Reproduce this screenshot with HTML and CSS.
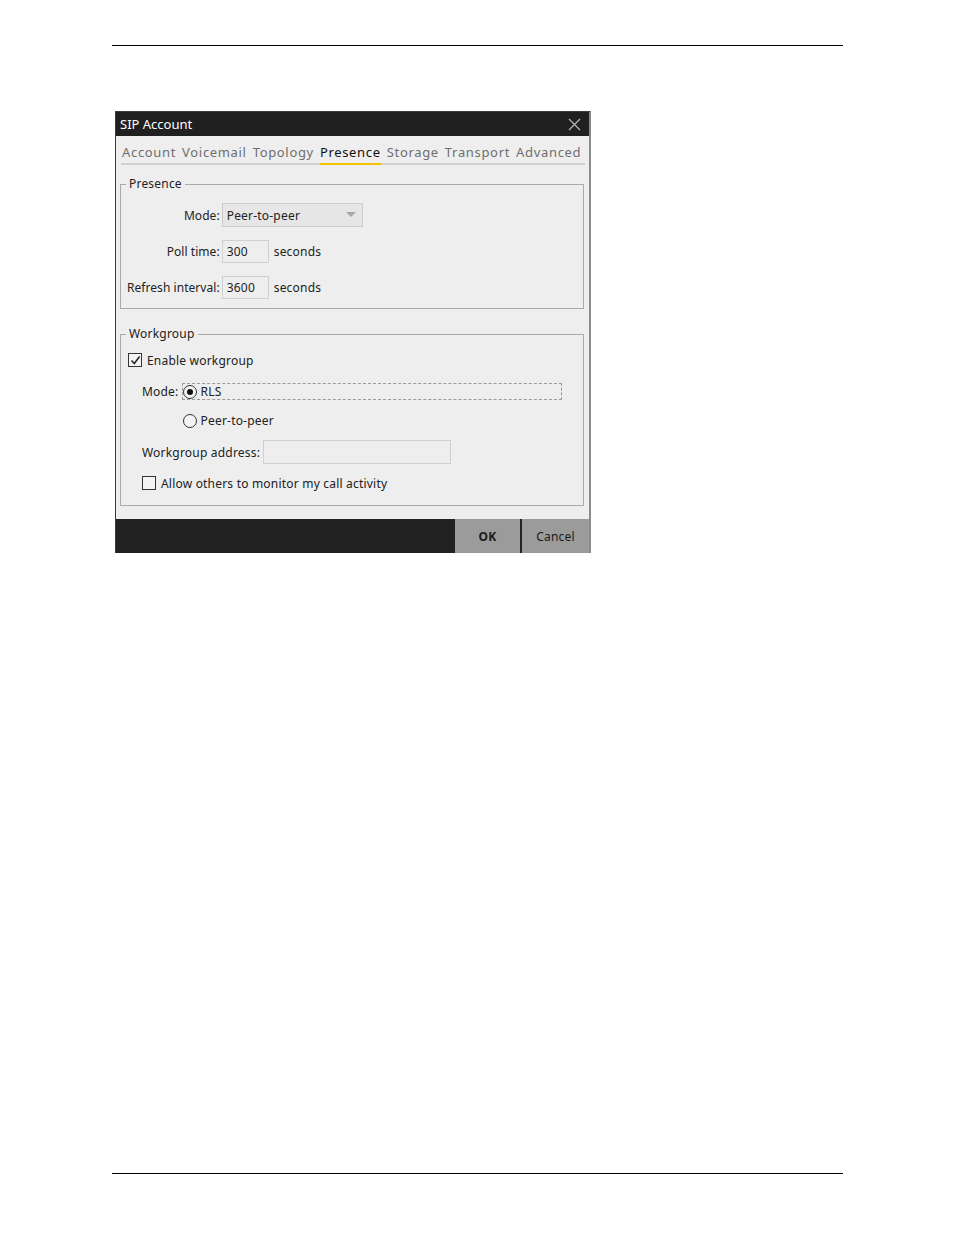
FILE: index.html
```html
<!DOCTYPE html>
<html>
<head>
<meta charset="utf-8">
<link rel="stylesheet" href="styles.css">
</head>
<body>
<div class="page">
  <div class="rule rule-top"></div>
  <div class="dialog">
    <div class="titlebar">
      <span class="title">SIP Account</span>
      <svg class="close" width="13" height="13" viewBox="0 0 13 13"><path d="M1 1 L12 12 M12 1 L1 12" stroke="#b0b0b0" stroke-width="1.4" fill="none"/></svg>
    </div>
    <div class="tabs">
      <span class="tab">Account</span>
      <span class="tab">Voicemail</span>
      <span class="tab">Topology</span>
      <span class="tab active">Presence</span>
      <span class="tab">Storage</span>
      <span class="tab">Transport</span>
      <span class="tab">Advanced</span>
    </div>
    <div class="content">
      <fieldset class="group presence">
        <legend>Presence</legend>
        <div class="form-grid">
          <span class="label">Mode:</span>
          <div class="field">
            <div class="select">
              <span>Peer-to-peer</span>
              <svg width="10" height="6" viewBox="0 0 10 6"><path d="M0 0 H10 L5 5 Z" fill="#a8a8a8"/></svg>
            </div>
          </div>
          <span class="label">Poll time:</span>
          <div class="field">
            <div class="input short">300</div>
            <span class="unit">seconds</span>
          </div>
          <span class="label">Refresh interval:</span>
          <div class="field">
            <div class="input short">3600</div>
            <span class="unit">seconds</span>
          </div>
        </div>
      </fieldset>
      <fieldset class="group workgroup">
        <legend>Workgroup</legend>
        <div class="check-row">
          <span class="checkbox checked"><svg width="11" height="11" viewBox="0 0 11 11"><path d="M1.5 5.5 L4.3 8.5 L9.6 1.5" stroke="#222" stroke-width="1.5" fill="none"/></svg></span>
          <span>Enable workgroup</span>
        </div>
        <div class="indent">
          <div class="mode-grid">
            <span class="label-left">Mode:</span>
            <div class="radio-row focused">
              <span class="radio on"><span class="dot"></span></span>
              <span>RLS</span>
            </div>
            <span></span>
            <div class="radio-row">
              <span class="radio"></span>
              <span>Peer-to-peer</span>
            </div>
          </div>
          <div class="addr-row">
            <span>Workgroup address:</span>
            <div class="input wide"></div>
          </div>
          <div class="check-row allow">
            <span class="checkbox"></span>
            <span>Allow others to monitor my call activity</span>
          </div>
        </div>
      </fieldset>
    </div>
    <div class="footer">
      <button class="btn ok">OK</button>
      <button class="btn cancel">Cancel</button>
    </div>
  </div>
  <div class="rule rule-bottom"></div>
</div>
</body>
</html>
```
FILE: styles.css
```css
* { box-sizing: border-box; }
html, body { margin: 0; padding: 0; background: #ffffff; }
body { font-family: "Noto Sans", "Open Sans", sans-serif; font-size: 12px; color: #222; letter-spacing: 0.2px; }

.page { width: 954px; height: 1235px; padding-left: 112px; padding-top: 45px; }
.rule { width: 731px; height: 1px; background: #000; }
.rule-bottom { margin-top: 620px; }

.dialog {
  margin-top: 65px;
  margin-left: 3px;
  width: 476px;
  height: 442px;
  background: #eeeeee;
  border: 1px solid #3a3a3a;
  border-right: 2px solid #8a8a8a;
  border-bottom: 0;
  display: flex;
  flex-direction: column;
}

.titlebar {
  height: 24px;
  background: #202020;
  color: #ffffff;
  display: flex;
  align-items: center;
  justify-content: space-between;
  padding: 0 8px 0 4px;
  font-size: 13px;
  letter-spacing: 0;
}
.close { display: block; }

.tabs {
  margin: 5px 4px 0 5px;
  height: 24px;
  border-bottom: 2px solid #cfcfcf;
  display: flex;
  gap: 6px;
  padding-left: 1px;
  font-size: 13px;
  letter-spacing: 0.67px;
}
.tab {
  color: #6e6e6e;
  line-height: 20px;
  padding-top: 1px;
  margin-bottom: -2px;
  border-bottom: 2px solid transparent;
}
.tab.active { color: #111; border-bottom-color: #f2c200; }

.content { flex: 1; padding: 11px 5px 0 4px; display: flex; flex-direction: column; gap: 17px; }

.group {
  margin: 0;
  border: 1px solid #a9a9a9;
  padding: 0 0 0 1px;
  min-width: 0;
}
.group legend {
  margin-left: 4px;
  padding: 0 3px;
  line-height: 16px;
  color: #222;
}

.form-grid {
  padding: 11px 0 9px 5px;
  display: grid;
  grid-template-columns: max-content max-content;
  column-gap: 2px;
  row-gap: 13px;
  align-items: center;
}
.label { text-align: right; letter-spacing: 0.05px; }
.field { display: flex; align-items: center; gap: 5px; }
.select {
  width: 141px;
  height: 24px;
  border: 1px solid #cdcdcd;
  background: #e6e6e6;
  display: flex;
  align-items: center;
  justify-content: space-between;
  padding: 0 6px 0 4px;
}
.input {
  height: 23px;
  border: 1px solid #d0d0d0;
  background: #eeeeee;
  padding: 0 4px;
  display: flex;
  align-items: center;
}
.input.short { width: 47px; }
.input.wide { width: 188px; height: 24px; }

.workgroup .check-row:first-of-type { margin-top: 10px; }
.workgroup > .check-row, .workgroup > .indent { margin-left: 6px; margin-right: 22px; }
.workgroup > .indent { margin-bottom: 14px; }
.check-row { display: flex; align-items: center; gap: 5px; height: 16px; }
.checkbox {
  width: 14px; height: 14px;
  border: 1px solid #333;
  background: #f4f4f4;
  display: flex; align-items: center; justify-content: center;
}
.indent { padding-left: 14px; display: flex; flex-direction: column; }
.mode-grid {
  margin-top: 15px;
  display: grid;
  grid-template-columns: max-content 1fr;
  column-gap: 4px;
  row-gap: 13px;
  align-items: center;
}
.radio-row { display: flex; align-items: center; gap: 4px; height: 15px; }
.radio-row.focused { outline: 1px dashed #9a9a9a; outline-offset: 0; }
.radio {
  width: 14px; height: 14px;
  border: 1px solid #333;
  border-radius: 50%;
  background: #f4f4f4;
  display: flex; align-items: center; justify-content: center;
}
.dot { width: 6px; height: 6px; border-radius: 50%; background: #111; }
.addr-row { margin-top: 12px; display: flex; align-items: center; gap: 3px; }
.check-row.allow { margin-top: 11px; }

.footer {
  height: 34px;
  background: #222222;
  display: flex;
  justify-content: flex-end;
  gap: 2px;
}
.btn {
  border: none;
  margin: 0;
  background: #9b9b9b;
  color: #1a1a1a;
  font-family: "Noto Sans", "Open Sans", sans-serif;
  font-size: 12px;
  letter-spacing: 0.2px;
  padding: 0;
  height: 34px;
}
.btn.ok { width: 65px; font-weight: bold; }
.btn.cancel { width: 67px; }
```
